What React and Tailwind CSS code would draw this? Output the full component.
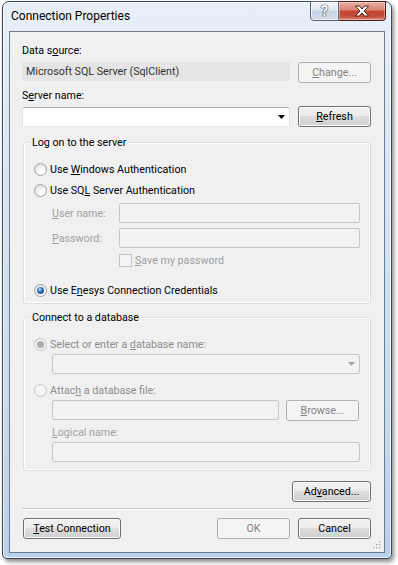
import clsx from "clsx";

const btn =
  "flex items-center justify-center rounded-[3px] border border-[#707070] bg-[linear-gradient(to_bottom,#f2f2f2_0%,#ebebeb_50%,#dddddd_50%,#cfcfcf_100%)] shadow-[inset_0_0_0_1px_#fcfcfc] text-black";
const btnOff =
  "flex items-center justify-center rounded-[3px] border border-[#adb2b5] bg-[#f4f4f4] text-[#838383]";
const boxOff = "h-[20px] rounded-[2px] border border-[#c4c8cc] bg-[#f2f2f2]";

const Radio = ({ checked, disabled }) => (
  <span
    className={clsx(
      "flex h-[13px] w-[13px] shrink-0 items-center justify-center rounded-full border",
      disabled
        ? "border-[#c4c4c4] bg-[#f4f4f4]"
        : "border-[#a2a2a2] bg-[radial-gradient(circle_at_65%_70%,#ffffff_15%,#d8d8d8_100%)]"
    )}
  >
    {checked && (
      <span
        className={clsx(
          "h-[7px] w-[7px] rounded-full",
          disabled
            ? "bg-[#acacac]"
            : "bg-[radial-gradient(circle_at_40%_35%,#a8d6ff_0%,#2a6fba_45%,#0d3a6e_100%)]"
        )}
      />
    )}
  </span>
);

const Group = ({ title, children, className }) => (
  <div
    className={clsx(
      "ml-[1px] w-[348px] rounded-[3px] border border-[#d5dfe5] shadow-[inset_0_0_0_1px_#ffffff]",
      className
    )}
  >
    <div className="-mt-[8px] ml-[6px] w-fit bg-[#f0f0f0] px-[2px] text-black">
      {title}
    </div>
    {children}
  </div>
);

const App = () => {
  return (
    <div className="h-[565px] w-[398px] bg-white pl-[2px] pt-[1px] font-[family-name:Roboto,sans-serif] text-[10.7px] leading-[15px]">
      <div className="flex h-[558px] w-[390px] flex-col rounded-t-[7px] rounded-b-[5px] border border-[#3b4654] bg-[linear-gradient(to_bottom,#e8eff8_0%,#d8e5f3_30%,#c9dbef_70%,#b8d0ea_100%)] shadow-[2px_3px_4px_rgba(0,0,0,0.45),inset_0_0_0_1px_rgba(255,255,255,0.7)]">
        {/* title bar */}
        <div className="flex h-[29px] items-start">
          <div className="pl-[8px] pt-[7px] text-[12px] text-black">
            Connection Properties
          </div>
          <div className="-mt-px ml-auto mr-[5px] flex">
            <div className="flex h-[20px] w-[29px] items-center justify-center rounded-bl-[4px] border border-[#5a6675] bg-[linear-gradient(to_bottom,#f2f6fa_0%,#dfe7f0_45%,#c6d3e2_50%,#d3deea_100%)] shadow-[inset_0_0_0_1px_rgba(255,255,255,0.6)]">
              <span className="text-[15px] font-bold leading-none text-white [text-shadow:0_0_1px_#2c3440,0_0_1px_#2c3440,0_0_1px_#2c3440]">
                ?
              </span>
            </div>
            <div className="flex h-[20px] w-[47px] items-center justify-center rounded-br-[4px] border border-l-0 border-[#4a1e1a] bg-[linear-gradient(to_bottom,#eab0a4_0%,#d98474_45%,#c4432f_50%,#c44f3b_80%,#df8c74_100%)] shadow-[inset_0_0_0_1px_rgba(255,255,255,0.35)]">
              <svg width="16" height="12" viewBox="0 0 16 12">
                <path
                  d="M1.5 1h3.8L8 4l2.7-3h3.8l-4.4 5 4.4 5h-3.8L8 8l-2.7 3H1.5l4.4-5z"
                  fill="#ffffff"
                  stroke="#3a1410"
                  strokeWidth="0.9"
                  strokeLinejoin="round"
                />
              </svg>
            </div>
          </div>
        </div>

        {/* client area */}
        <div className="relative ml-[6px] h-[522px] w-[376px] border border-[#6f7e8e] bg-[#f0f0f0]">
          <div className="flex flex-col pl-[12px] pr-[13px] pt-[11px]">
            <div className="h-[15px] text-black">
              Data s<u>o</u>urce:
            </div>
            <div className="mt-[4px] flex h-[21px] items-start justify-between">
              <div className="flex h-[19px] w-[268px] items-center bg-[#e5e5e5] pl-[4px] text-[#333333]">
                Microsoft SQL Server (SqlClient)
              </div>
              <div className={clsx(btnOff, "h-[21px] w-[73px]")}>
                <span>
                  <u>C</u>hange...
                </span>
              </div>
            </div>

            <div className="mt-[5px] h-[15px] text-black">
              S<u>e</u>rver name:
            </div>
            <div className="mt-[3px] flex h-[21px] items-start justify-between">
              <div className="mt-px flex h-[20px] w-[268px] items-center justify-end rounded-[2px] border border-[#abadb3] border-b-[#e3e9ef] border-l-[#e2e3ea] border-r-[#dbdfe6] bg-white pr-[4px]">
                <svg width="7" height="4" viewBox="0 0 7 4">
                  <path d="M0 0h7L3.5 4z" fill="#000000" />
                </svg>
              </div>
              <div className={clsx(btn, "h-[21px] w-[73px]")}>
                <span>
                  <u>R</u>efresh
                </span>
              </div>
            </div>

            <Group title="Log on to the server" className="mt-[15px] h-[162px]">
              <div className="flex flex-col pl-[10px] pr-[10px]">
                <div className="mt-[12px] flex h-[15px] items-center gap-[3px] text-black">
                  <Radio />
                  <span>
                    Use <u>W</u>indows Authentication
                  </span>
                </div>
                <div className="mt-[6px] flex h-[15px] items-center gap-[3px] text-black">
                  <Radio />
                  <span>
                    Use SQ<u>L</u> Server Authentication
                  </span>
                </div>
                <div className="mt-[5px] flex h-[20px] items-center pl-[18px]">
                  <span className="w-[67px] text-[#a0a0a0]">
                    <u>U</u>ser name:
                  </span>
                  <div className={clsx(boxOff, "w-[241px]")} />
                </div>
                <div className="mt-[5px] flex h-[20px] items-center pl-[18px]">
                  <span className="w-[67px] text-[#a0a0a0]">
                    <u>P</u>assword:
                  </span>
                  <div className={clsx(boxOff, "w-[241px]")} />
                </div>
                <div className="mt-[5px] flex h-[14px] items-center gap-[3px] pl-[85px] text-[#a0a0a0]">
                  <span className="h-[13px] w-[13px] border border-[#c4c4c4] bg-[#f4f4f4]" />
                  <span>
                    <u>S</u>ave my password
                  </span>
                </div>
                <div className="mt-[16px] flex h-[15px] items-center gap-[3px] text-black">
                  <Radio checked />
                  <span>
                    Use E<u>n</u>esys Connection Credentials
                  </span>
                </div>
              </div>
            </Group>

            <Group title="Connect to a database" className="mt-[13px] h-[154px]">
              <div className="flex flex-col pl-[10px] pr-[10px]">
                <div className="mt-[12px] flex h-[15px] items-center gap-[3px] text-[#8d8d8d]">
                  <Radio checked disabled />
                  <span>
                    Select or enter a <u>d</u>atabase name:
                  </span>
                </div>
                <div className="ml-[18px] mt-[2px] flex h-[20px] w-[308px] items-center justify-end rounded-[2px] border border-[#c4c8cc] bg-[#f2f2f2] pr-[4px]">
                  <svg width="7" height="4" viewBox="0 0 7 4">
                    <path d="M0 0h7L3.5 4z" fill="#a6a6a6" />
                  </svg>
                </div>
                <div className="mt-[9px] flex h-[15px] items-center gap-[3px] text-[#8d8d8d]">
                  <Radio disabled />
                  <span>
                    Attac<u>h</u> a database file:
                  </span>
                </div>
                <div className="ml-[18px] mt-[2px] flex h-[21px] w-[307px] items-start justify-between">
                  <div className={clsx(boxOff, "w-[227px]")} />
                  <div className={clsx(btnOff, "h-[21px] w-[73px]")}>
                    <span>
                      <u>B</u>rowse...
                    </span>
                  </div>
                </div>
                <div className="ml-[18px] mt-[4px] h-[15px] text-[#a0a0a0]">
                  <u>L</u>ogical name:
                </div>
                <div className={clsx(boxOff, "ml-[18px] mt-[2px] w-[308px]")} />
              </div>
            </Group>

            <div className="mt-[10px] flex justify-end">
              <div className={clsx(btn, "h-[21px] w-[79px]")}>
                <span>
                  Ad<u>v</u>anced...
                </span>
              </div>
            </div>

            <div className="mt-[6px] h-px w-[349px] bg-[#c9c9c9] shadow-[0_1px_0_#ffffff]" />

            <div className="mt-[9px] flex h-[21px] items-start">
              <div className={clsx(btn, "ml-[1px] h-[21px] w-[98px]")}>
                <span>
                  <u>T</u>est Connection
                </span>
              </div>
              <div className={clsx(btnOff, "ml-auto h-[21px] w-[73px]")}>
                OK
              </div>
              <div className={clsx(btn, "ml-[8px] h-[21px] w-[73px]")}>
                Cancel
              </div>
            </div>
          </div>

          {/* size grip */}
          <svg
            className="absolute bottom-[2px] right-[2px]"
            width="10"
            height="10"
            viewBox="0 0 10 10"
          >
            {[
              [8, 2],
              [8, 5],
              [5, 5],
              [8, 8],
              [5, 8],
              [2, 8],
            ].map(([x, y]) => (
              <g key={`${x}-${y}`}>
                <rect x={x} y={y} width="1.5" height="1.5" fill="#ffffff" />
                <rect x={x - 1} y={y - 1} width="1.5" height="1.5" fill="#a8b0b8" />
              </g>
            ))}
          </svg>
        </div>
      </div>
    </div>
  );
};

export default App;
